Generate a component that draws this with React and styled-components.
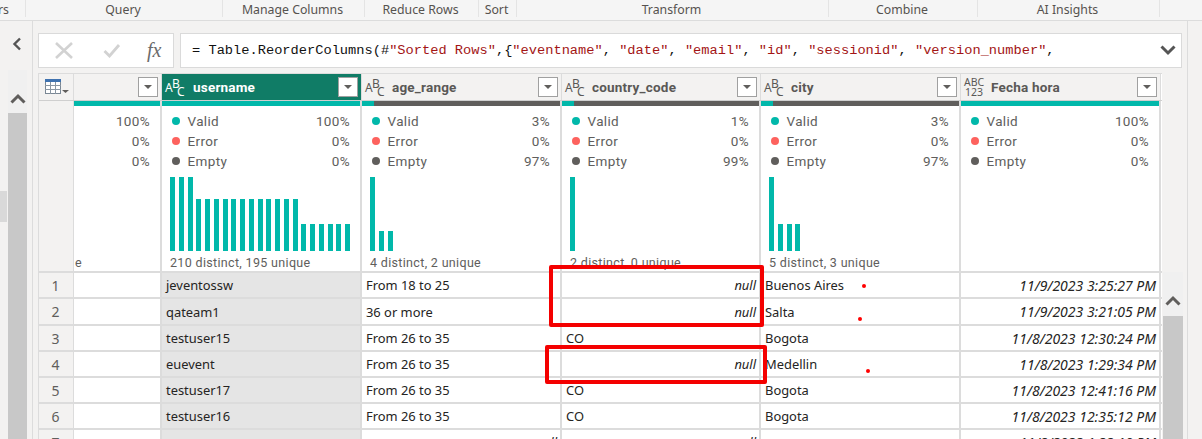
import React from 'react';
import styled, { createGlobalStyle } from 'styled-components';

const UI = '"Noto Sans", "Open Sans", sans-serif';
const DIN = 'Roboto, "Noto Sans", sans-serif';

const groups = [
  { label: 'rs', w: 26, align: 'right' },
  { label: 'Query', w: 197 },
  { label: 'Manage Columns', w: 142 },
  { label: 'Reduce Rows', w: 114 },
  { label: 'Sort', w: 38 },
  { label: 'Transform', w: 312 },
  { label: 'Combine', w: 149 },
  { label: 'AI Insights', w: 182 },
];

const columns = [
  { name: '', width: 88, type: null, valid: '100%', error: '0%', empty: '0%', cut: true, footer: 'e' },
  { name: 'username', width: 200, type: 'abc', selected: true, valid: '100%', error: '0%', empty: '0%', validPct: 100, bars: [74, 74, 74, 52, 52, 52, 52, 52, 52, 52, 52, 52, 52, 52, 52, 27, 27, 27, 27, 27, 27], footer: '210 distinct, 195 unique', grey: true, cells: ['jeventossw', 'qateam1', 'testuser15', 'euevent', 'testuser17', 'testuser16', ''] },
  { name: 'age_range', width: 200, type: 'abc', valid: '3%', error: '0%', empty: '97%', validPct: 6, bars: [74, 20, 20], footer: '4 distinct, 2 unique', cells: ['From 18 to 25', '36 or more', 'From 26 to 35', 'From 26 to 35', 'From 26 to 35', 'From 26 to 35', null] },
  { name: 'country_code', width: 199, type: 'abc', valid: '1%', error: '0%', empty: '99%', validPct: 6, bars: [74], footer: '2 distinct, 0 unique', cells: [null, null, 'CO', null, 'CO', 'CO', null] },
  { name: 'city', width: 200, type: 'abc', valid: '3%', error: '0%', empty: '97%', validPct: 6, bars: [74, 27, 27, 27], footer: '5 distinct, 3 unique', cells: ['Buenos Aires', 'Salta', 'Bogota', 'Medellin', 'Bogota', 'Bogota', ''] },
  { name: 'Fecha hora', width: 200, type: '123', valid: '100%', error: '0%', empty: '0%', validPct: 100, bars: [], footer: '', right: true, cells: ['11/9/2023 3:25:27 PM', '11/9/2023 3:21:05 PM', '11/8/2023 12:30:24 PM', '11/8/2023 1:29:34 PM', '11/8/2023 12:41:16 PM', '11/8/2023 12:35:12 PM', '11/8/2023 1:22:10 PM'] },
];

const rowHeights = [26, 27, 26, 26, 26, 26, 26];

const Global = createGlobalStyle`
  html, body { margin: 0; padding: 0; height: 439px; overflow: hidden; background: #f3f2f1; }
`;

const Page = styled.div`
  position: relative;
  width: 1202px;
  height: 439px;
  overflow: hidden;
  font-family: ${UI};
  color: #252423;
`;

const Ribbon = styled.div`
  display: flex;
  height: 20px;
  background: #f5f5f5;
  border-bottom: 1px solid #dcdcdc;
`;

const RibbonGroup = styled.div`
  width: ${(p) => p.$w}px;
  box-sizing: border-box;
  height: 17px;
  display: flex;
  align-items: center;
  justify-content: ${(p) => (p.$align === 'right' ? 'flex-end' : 'center')};
  padding: 2px ${(p) => (p.$align === 'right' ? '16px' : '2px')} 0 0;
  border-right: 1px solid #e4e4e4;
  font-size: 12.3px;
  color: #55524f;
  white-space: nowrap;
  line-height: 20px;
  overflow: hidden;
`;

const Body = styled.div`
  display: flex;
  height: 418px;
`;

const NavRail = styled.div`
  width: 32px;
  flex: none;
  border-right: 1px solid #dcdcdc;
  display: flex;
  flex-direction: column;
  padding-top: 16px;
`;

const Collapse = styled.div`
  height: 14px;
  padding-left: 12px;
  display: flex;
  align-items: center;
`;

const RailBody = styled.div`
  display: flex;
  flex: 1;
  margin-top: 19px;
`;

const RailEdge = styled.div`
  width: 8px;
  flex: none;
  padding-top: 121px;
`;

const RailMark = styled.div`
  width: 7px;
  height: 31px;
  background: #d9d9d9;
`;

const ScrollTrack = styled.div`
  width: 19px;
  display: flex;
  flex-direction: column;
  background: #f0f0f0;
`;

const ScrollCap = styled.div`
  height: ${(p) => p.$h}px;
  box-sizing: border-box;
  padding-top: ${(p) => p.$pad}px;
  flex: none;
  display: flex;
  align-items: center;
  justify-content: center;
`;

const ScrollThumb = styled.div`
  flex: 1;
  background: #c8c8c8;
`;

const Main = styled.div`
  width: 1155px;
  flex: none;
  box-sizing: border-box;
  padding: 12px 0 0 5px;
  border-right: 1px solid #dcdcdc;
`;

const FormulaRow = styled.div`
  display: flex;
  gap: 6px;
  height: 35px;
  margin-bottom: 5px;
`;

const FormulaButtons = styled.div`
  width: 136px;
  box-sizing: border-box;
  background: #fff;
  border: 1px solid #dadada;
  display: flex;
  align-items: center;
  padding-left: 15px;
`;

const CheckIcon = styled.svg`
  margin-left: 29px;
`;

const FxLabel = styled.span`
  font-family: "Liberation Serif", serif;
  font-style: italic;
  font-size: 20px;
  color: #6b6b6b;
  margin-left: 26px;
`;

const FormulaInput = styled.div`
  width: 1002px;
  box-sizing: border-box;
  background: #fff;
  border: 1px solid #dadada;
  display: flex;
  align-items: center;
  justify-content: space-between;
  padding: 0 5px 0 11px;
  font-family: "Liberation Mono", monospace;
  font-size: 13.7px;
  color: #111;
  white-space: pre;
`;

const Str = styled.span`
  color: #a31515;
`;

const GridWrap = styled.div`
  display: flex;
`;

const Grid = styled.div`
  width: 1123px;
  flex: none;
  border-top: 1px solid #dcdcdc;
  border-left: 1px solid #dcdcdc;
  background: #fff;
`;

const HeaderRow = styled.div`
  display: flex;
  height: 26px;
  border-bottom: 1px solid #cfcfcf;
`;

const Corner = styled.div`
  width: 35px;
  flex: none;
  box-sizing: border-box;
  background: #f3f2f1;
  border-right: 1px solid #dcdcdc;
  display: flex;
  align-items: center;
  padding-left: 6px;
`;

const HeaderCell = styled.div`
  width: ${(p) => p.$w}px;
  flex: none;
  box-sizing: border-box;
  display: flex;
  align-items: center;
  padding: 0 3px;
  background: ${(p) => (p.$selected ? '#107c66' : '#f3f2f1')};
  color: ${(p) => (p.$selected ? '#fff' : '#5a5856')};
  border-right: 1px solid #dcdcdc;
  font-family: ${DIN};
  font-size: 13.5px;
  font-weight: 700;
`;

const HeaderName = styled.span`
  flex: 1;
  margin-left: ${(p) => (p.$selected ? 8 : 7)}px;
  letter-spacing: 0.2px;
`;

const TypeIcon = styled.span`
  width: 20px;
  height: 20px;
  flex: none;
  display: block;
  position: relative;
  font-family: ${UI};
  font-weight: 400;
  line-height: 10px;
  color: inherit;
`;

const TypeLetter = styled.span`
  position: absolute;
  font-size: 12px;
  left: ${(p) => p.$x}px;
  top: ${(p) => p.$y}px;
`;

const TypeStack = styled.span`
  display: flex;
  flex-direction: column;
  width: 20px;
  flex: none;
  font-weight: 400;
  font-size: 10.5px;
  line-height: 10px;
  text-align: center;
  font-family: ${UI};
`;

const FilterBox = styled.div`
  width: 20px;
  height: 20px;
  flex: none;
  box-sizing: border-box;
  background: #fff;
  border: 1px solid #a0a0a0;
  display: flex;
  align-items: center;
  justify-content: center;
  &::after {
    content: '';
    border-left: 4.5px solid transparent;
    border-right: 4.5px solid transparent;
    border-top: 4.5px solid #605e5c;
  }
`;

const QualityRow = styled.div`
  display: flex;
  height: 170px;
  border-bottom: 2px solid #dcdcdc;
`;

const QualitySpacer = styled.div`
  width: 35px;
  flex: none;
  box-sizing: border-box;
  background: #f3f2f1;
  border-right: 1px solid #dcdcdc;
`;

const ProfileCol = styled.div`
  width: ${(p) => p.$w}px;
  flex: none;
  box-sizing: border-box;
  border-right: 2px solid #dcdcdc;
  display: flex;
  flex-direction: column;
`;

const QualityBar = styled.div`
  height: 5px;
  flex: none;
  background: #605e5c;
  margin-bottom: 5px;
  &::before {
    content: '';
    display: block;
    height: 100%;
    width: ${(p) => p.$pct}%;
    background: #01b8aa;
  }
`;

const Stats = styled.div`
  display: flex;
  flex-direction: column;
  padding: 0 10px;
  font-family: ${DIN};
  font-size: 13.5px;
  color: #605e5c;
  letter-spacing: 0.35px;
`;

const StatRow = styled.div`
  display: flex;
  align-items: center;
  height: 20px;
  justify-content: ${(p) => (p.$end ? 'flex-end' : 'flex-start')};
`;

const Dot = styled.span`
  width: 8px;
  height: 8px;
  border-radius: 50%;
  flex: none;
  background: ${(p) => p.$c};
  margin-right: 7.5px;
`;

const StatLabel = styled.span`
  flex: 1;
`;

const Histogram = styled.div`
  height: 74px;
  margin-top: 6px;
  padding-left: 8px;
  display: flex;
  align-items: flex-end;
  gap: 3.75px;
`;

const Bar = styled.div`
  width: 5px;
  height: ${(p) => p.$h}px;
  background: #01b8aa;
`;

const Footer = styled.div`
  padding-left: ${(p) => (p.$cut ? '1px' : '8px')};
  height: 20px;
  line-height: 23px;
  font-family: ${DIN};
  font-size: 12.5px;
  color: #605e5c;
  letter-spacing: 0.33px;
  white-space: nowrap;
  overflow: hidden;
`;

const DataRow = styled.div`
  display: flex;
  height: ${(p) => p.$h}px;
  box-sizing: border-box;
  border-bottom: 2px solid #dcdcdc;
`;

const RowNum = styled.div`
  width: 35px;
  flex: none;
  box-sizing: border-box;
  background: #f3f2f1;
  border-right: 1px solid #dcdcdc;
  display: flex;
  align-items: center;
  justify-content: center;
  font-size: 14px;
  color: #605e5c;
  padding-right: 1px;
`;

const Cell = styled.div`
  width: ${(p) => p.$w}px;
  flex: none;
  box-sizing: border-box;
  border-right: 2px solid #dcdcdc;
  background: ${(p) => (p.$grey ? '#e5e5e5' : '#fff')};
  display: flex;
  align-items: center;
  justify-content: ${(p) => (p.$right ? 'flex-end' : 'flex-start')};
  padding: 0 3px 0 4px;
  font-size: ${(p) => (p.$date ? '14px' : '12.9px')};
  font-style: ${(p) => (p.$right ? 'italic' : 'normal')};
  color: #252423;
  white-space: nowrap;
  overflow: hidden;
`;

const RightBar = styled.div`
  width: 20px;
  flex: none;
  margin-left: 1px;
  margin-top: 199px;
  display: flex;
  flex-direction: column;
  background: #f0f0f0;
  height: 167px;
`;

const Annotation = styled.div`
  position: absolute;
  left: ${(p) => p.$x}px;
  top: ${(p) => p.$y}px;
  width: ${(p) => p.$w}px;
  height: ${(p) => p.$h}px;
  box-sizing: border-box;
  border: 4px solid #f40000;
  border-radius: 2px;
`;

const RedDot = styled.div`
  position: absolute;
  left: ${(p) => p.$x}px;
  top: ${(p) => p.$y}px;
  width: 4px;
  height: 4px;
  border-radius: 50%;
  background: #f00;
`;

const Chevron = ({ up = true, color = '#605e5c' }) => (
  <svg width="16" height="11" viewBox="0 0 16 11">
    <path d={up ? 'M1.5 9.5L8 3L14.5 9.5' : 'M1.5 1.5L8 8L14.5 1.5'} fill="none" stroke={color} strokeWidth="3" />
  </svg>
);

const TableIcon = () => (
  <svg width="25" height="16" viewBox="0 0 25 16">
    <rect x="0.5" y="0.5" width="15" height="14" fill="#fff" stroke="#7a8794" />
    <rect x="0" y="0" width="16" height="3" fill="#3f72af" />
    <path d="M5.5 3V15M10.5 3V15M0 6.5H16M0 10.5H16" stroke="#8a97a3" strokeWidth="1" />
    <path d="M17 11H24L20.5 14Z" fill="#605e5c" />
  </svg>
);

const AbcType = () => (
  <TypeIcon>
    <TypeLetter $x={0} $y={6}>A</TypeLetter>
    <TypeLetter $x={7} $y={2}>B</TypeLetter>
    <TypeLetter $x={12} $y={10}>C</TypeLetter>
  </TypeIcon>
);

const Stat = ({ color, label, value }) => (
  <StatRow>
    <Dot $c={color} />
    <StatLabel>{label}</StatLabel>
    <span>{value}</span>
  </StatRow>
);

export default function App() {
  return (
    <Page>
      <Global />
      <Ribbon>
        {groups.map((g) => (
          <RibbonGroup key={g.label} $w={g.w} $align={g.align}>{g.label}</RibbonGroup>
        ))}
      </Ribbon>
      <Body>
        <NavRail>
          <Collapse>
            <svg width="10" height="14" viewBox="0 0 10 14">
              <path d="M8 1.5L2.5 7L8 12.5" fill="none" stroke="#555" strokeWidth="2.4" />
            </svg>
          </Collapse>
          <RailBody>
            <RailEdge><RailMark /></RailEdge>
            <ScrollTrack>
              <ScrollCap $h={43} $pad={13}><Chevron /></ScrollCap>
              <ScrollThumb />
            </ScrollTrack>
          </RailBody>
        </NavRail>
        <Main>
          <FormulaRow>
            <FormulaButtons>
              <svg width="20" height="17" viewBox="0 0 20 17">
                <path d="M2 1L18 16M18 1L2 16" stroke="#d2d2d2" strokeWidth="2.6" fill="none" />
              </svg>
              <CheckIcon width="18" height="15" viewBox="0 0 18 15">
                <path d="M1.5 8L6.5 13L16 2" stroke="#d2d2d2" strokeWidth="2.8" fill="none" />
              </CheckIcon>
              <FxLabel>fx</FxLabel>
            </FormulaButtons>
            <FormulaInput>
              <span>= Table.ReorderColumns(#<Str>"Sorted Rows"</Str>,{'{'}<Str>"eventname"</Str>, <Str>"date"</Str>, <Str>"email"</Str>, <Str>"id"</Str>, <Str>"sessionid"</Str>, <Str>"version_number"</Str>,</span>
              <Chevron up={false} color="#555" />
            </FormulaInput>
          </FormulaRow>
          <GridWrap>
            <Grid>
              <HeaderRow>
                <Corner><TableIcon /></Corner>
                {columns.map((c) => (
                  <HeaderCell key={c.name || 'cut'} $w={c.width} $selected={c.selected}>
                    {c.type === 'abc' && <AbcType />}
                    {c.type === '123' && <TypeStack><span>ABC</span><span>123</span></TypeStack>}
                    <HeaderName $selected={c.selected}>{c.name}</HeaderName>
                    <FilterBox />
                  </HeaderCell>
                ))}
              </HeaderRow>
              <QualityRow>
                <QualitySpacer />
                {columns.map((c) => (
                  <ProfileCol key={c.name || 'cut'} $w={c.width}>
                    <QualityBar $pct={c.cut ? 100 : c.validPct} />
                    {c.cut ? (
                      <Stats>
                        <StatRow $end>100%</StatRow>
                        <StatRow $end>0%</StatRow>
                        <StatRow $end>0%</StatRow>
                      </Stats>
                    ) : (
                      <Stats>
                        <Stat color="#01b8aa" label="Valid" value={c.valid} />
                        <Stat color="#fd625e" label="Error" value={c.error} />
                        <Stat color="#605e5c" label="Empty" value={c.empty} />
                      </Stats>
                    )}
                    <Histogram>
                      {(c.bars || []).map((h, i) => <Bar key={i} $h={h} />)}
                    </Histogram>
                    <Footer $cut={c.cut}>{c.footer}</Footer>
                  </ProfileCol>
                ))}
              </QualityRow>
              {rowHeights.map((h, r) => (
                <DataRow key={r} $h={h}>
                  <RowNum>{r + 1}</RowNum>
                  {columns.map((c, i) => {
                    const value = c.cells ? c.cells[r] : '';
                    return (
                      <Cell key={i} $w={c.width} $grey={c.grey} $date={c.right} $right={c.right || value === null}>
                        {value === null ? 'null' : value}
                      </Cell>
                    );
                  })}
                </DataRow>
              ))}
            </Grid>
            <RightBar>
              <ScrollCap $h={44} $pad={12}><Chevron /></ScrollCap>
              <ScrollThumb />
            </RightBar>
          </GridWrap>
        </Main>
      </Body>
      <Annotation $x={549} $y={265} $w={215} $h={62} />
      <Annotation $x={545} $y={345} $w={222} $h={39} />
      <RedDot $x={862} $y={284} />
      <RedDot $x={858} $y={317} />
      <RedDot $x={866} $y={369} />
    </Page>
  );
}
